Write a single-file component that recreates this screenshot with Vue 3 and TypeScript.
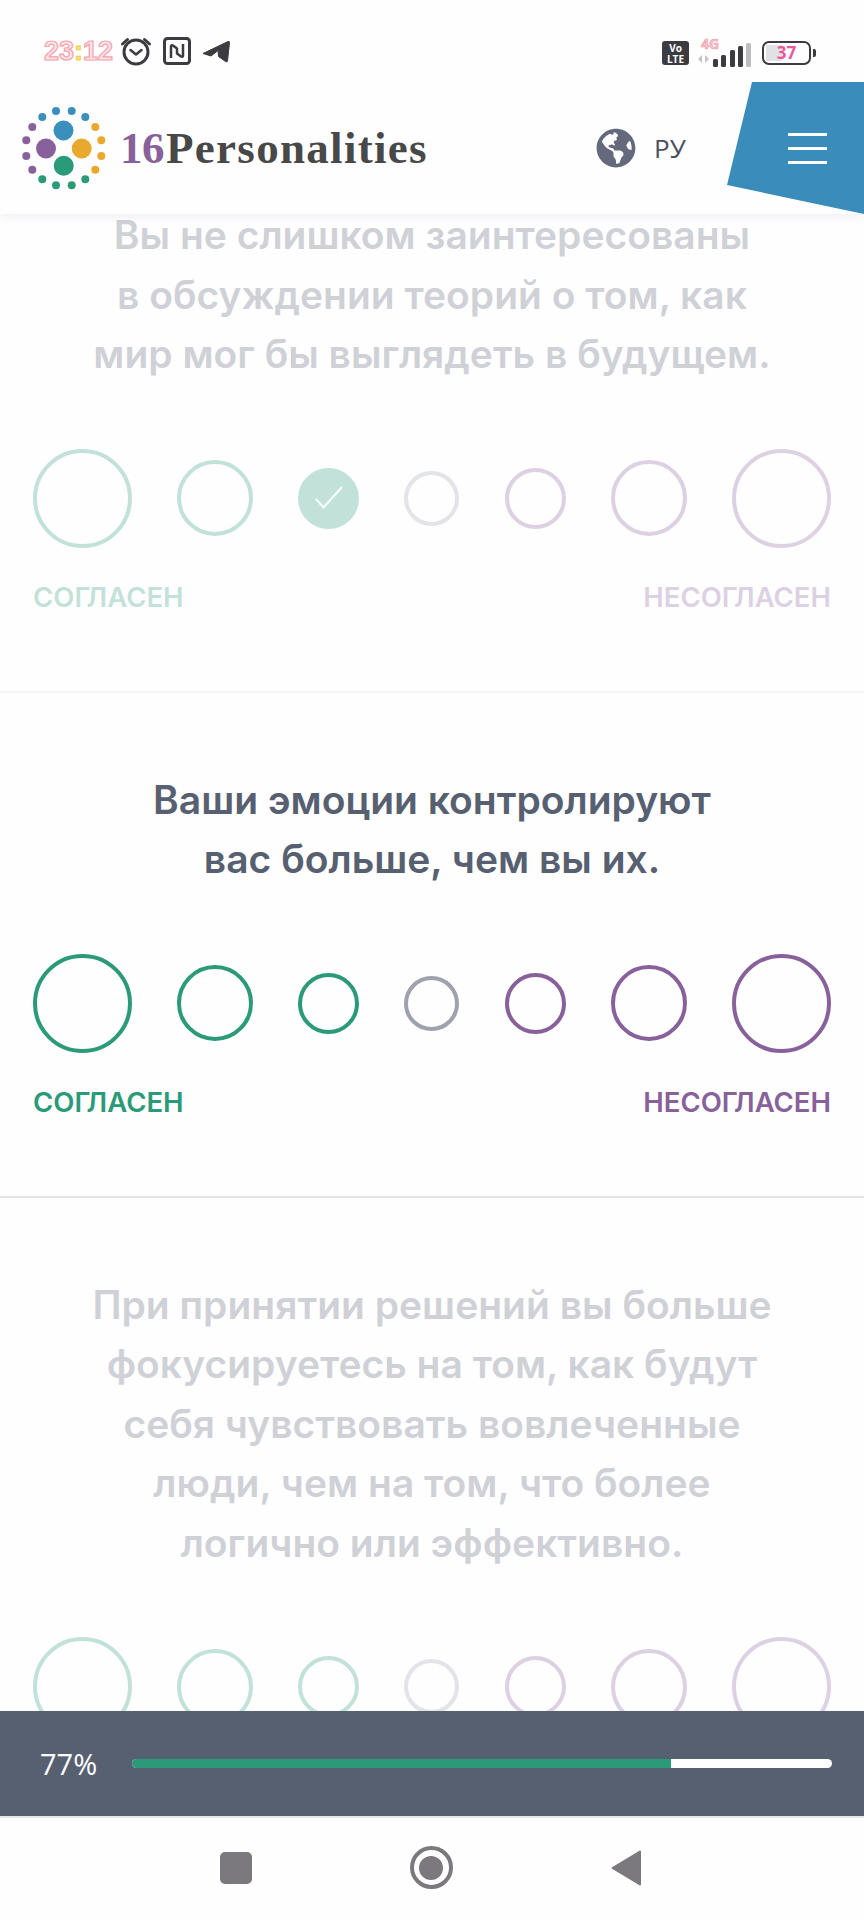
<script setup lang="ts">
interface Question {
  lines: string[]
  active: boolean
  selected?: number
  // the last question runs under the progress bar, its captions are never seen
  hideCaptions?: boolean
}

const questions: Question[] = [
  {
    lines: ['Вы не слишком заинтересованы', 'в обсуждении теорий о том, как', 'мир мог бы выглядеть в будущем.'],
    active: false,
    selected: 2,
  },
  {
    lines: ['Ваши эмоции контролируют', 'вас больше, чем вы их.'],
    active: true,
  },
  {
    lines: [
      'При принятии решений вы больше',
      'фокусируетесь на том, как будут',
      'себя чувствовать вовлеченные',
      'люди, чем на том, что более',
      'логично или эффективно.',
    ],
    active: false,
    hideCaptions: true,
  },
]

const options = [
  { size: 99, tone: 'agree' },
  { size: 76, tone: 'agree' },
  { size: 61, tone: 'agree' },
  { size: 55, tone: 'neutral' },
  { size: 61, tone: 'disagree' },
  { size: 76, tone: 'disagree' },
  { size: 99, tone: 'disagree' },
]

const logoBig = [
  { x: 63.5, y: 130.5, c: '#3a8fbd' },
  { x: 46, y: 148.5, c: '#88619a' },
  { x: 81.7, y: 148.5, c: '#e8a92e' },
  { x: 63.7, y: 165.7, c: '#2a9a78' },
]

const logoSmall = [
  { x: 42.3, y: 117, c: '#3a8fbd' },
  { x: 56, y: 111, c: '#3a8fbd' },
  { x: 71.7, y: 111, c: '#3a8fbd' },
  { x: 85.3, y: 117, c: '#3a8fbd' },
  { x: 95.3, y: 127, c: '#e8a92e' },
  { x: 101.3, y: 140.3, c: '#e8a92e' },
  { x: 101.3, y: 156, c: '#e8a92e' },
  { x: 95.3, y: 169.7, c: '#e8a92e' },
  { x: 85.3, y: 179.3, c: '#2a9a78' },
  { x: 71.7, y: 185.3, c: '#2a9a78' },
  { x: 56, y: 185.3, c: '#2a9a78' },
  { x: 42.3, y: 179.3, c: '#2a9a78' },
  { x: 32.3, y: 169.7, c: '#88619a' },
  { x: 26.3, y: 156, c: '#88619a' },
  { x: 26.3, y: 140.3, c: '#88619a' },
  { x: 32.3, y: 127, c: '#88619a' },
]

const progress = 77
</script>

<template>
  <div class="phone">
    <div class="status">
      <div class="status-left">
        <span class="clock">23<i>:</i>12</span>
        <svg width="32" height="30" viewBox="0 0 32 30" fill="none" stroke="#3c3c40" aria-hidden="true">
          <circle cx="16" cy="16" r="12" stroke-width="3" />
          <path d="M10.500 14l5.500 4.500 5.500-4.500" stroke-width="2.500" stroke-linecap="round" stroke-linejoin="round" />
          <path d="M2.500 8l5-4.500M29.500 8l-5-4.500" stroke-width="3" stroke-linecap="round" />
        </svg>
        <svg width="28" height="28" viewBox="0 0 28 28" fill="none" stroke="#3c3c40" aria-hidden="true">
          <rect x="1.500" y="1.500" width="25" height="25" rx="3" stroke-width="3" />
          <path d="M8 21V9.500q0-2 2-1l4 3v5M20 7v11.500q0 2-2 1l-4-3v-5" stroke-width="2.500" stroke-linejoin="round" />
        </svg>
        <svg width="28" height="24" viewBox="0 0 28 24" aria-hidden="true">
          <path d="M1 14.500L26 2.500q1.500-.5 1.500 1L25.500 22q-.5 1.500-2 .5l-7-5-.5-6-7 5.500z" fill="#3c3c40" stroke="#3c3c40" stroke-linejoin="round" />
        </svg>
      </div>
      <div class="status-right">
        <span class="volte">Vo<br />LTE</span>
        <div class="signal">
          <span class="net">4G</span>
          <svg width="54" height="25" viewBox="0 0 54 25" aria-hidden="true">
            <path d="M5 12v8l-4-4zM8 12v8l4-4z" fill="#c4c4c6" />
            <rect x="16" y="16" width="5" height="8" rx="1.500" fill="#3c3c40" />
            <rect x="24" y="12" width="5" height="12" rx="1.500" fill="#3c3c40" />
            <rect x="33" y="7" width="5" height="17" rx="1.500" fill="#3c3c40" />
            <rect x="41" y="3" width="5" height="21" rx="1.500" fill="#3c3c40" />
            <rect x="49" y="0" width="5" height="24" rx="1.500" fill="#bdbdc0" />
          </svg>
        </div>
        <div class="battery">
          <div class="battery-body">
            <span class="battery-level" />
            <span class="battery-text">37</span>
          </div>
          <span class="battery-nub" />
        </div>
      </div>
    </div>

    <header class="site-header">
      <div class="logo">
        <svg class="logo-mark" width="88" height="112" viewBox="20 92 88 112" aria-hidden="true">
          <circle v-for="d in logoBig" :key="`b${d.x}`" :cx="d.x" :cy="d.y" r="10" :fill="d.c" />
          <circle v-for="d in logoSmall" :key="`s${d.x}-${d.y}`" :cx="d.x" :cy="d.y" r="4" :fill="d.c" />
        </svg>
        <span class="logo-text"><b>16</b>Personalities</span>
      </div>
      <div class="lang">
        <svg width="40" height="40" viewBox="0 0 496 512" aria-hidden="true">
          <path
            fill="#646a7c"
            d="M248 8C111.030 8 0 119.030 0 256s111.030 248 248 248 248-111.030 248-248S384.970 8 248 8zm82.290 357.600c-3.900 3.880-7.990 7.950-11.310 11.280-2.990 3-5.100 6.700-6.170 10.710-1.510 5.660-2.730 11.380-4.770 16.870l-17.390 46.850c-13.760 3-28 4.690-42.650 4.690v-27.380c1.690-12.620-7.640-36.260-22.630-51.250-6-6-9.370-14.140-9.370-22.630v-32.010c0-11.640-6.270-22.340-16.460-27.970-14.370-7.950-34.810-19.060-48.810-26.110-11.480-5.780-22.100-13.140-31.650-21.750l-.8-.72a114.792 114.792 0 0 1-18.060-20.740c-9.380-13.770-24.660-36.420-34.590-51.140 20.470-45.500 57.360-82.040 103.200-101.890l24.010 12.010C203.480 89.740 216 82.010 216 70.110v-11.300c7.990-1.290 16.120-2.110 24.450-2.420l28.300 28.300c6.250 6.250 6.250 16.380 0 22.630L264 112l-10.340 10.340c-3.120 3.120-3.120 8.190 0 11.310l4.690 4.690c3.120 3.120 3.120 8.190 0 11.310l-8 8a8.008 8.008 0 0 1-5.660 2.340h-8.990c-2.080 0-4.080.81-5.580 2.270l-9.920 9.650a8.008 8.008 0 0 0-1.580 9.310l15.590 31.190c2.660 5.320-1.210 11.580-7.150 11.580h-5.640c-1.930 0-3.790-.7-5.240-1.960l-9.280-8.060a16.017 16.017 0 0 0-15.550-3.100l-31.170 10.390a11.950 11.950 0 0 0-8.170 11.340c0 4.530 2.560 8.660 6.610 10.690l11.080 5.540c9.410 4.710 19.790 7.160 30.310 7.160s22.590 27.290 32 32h66.750c8.490 0 16.620 3.370 22.630 9.370l13.690 13.690a30.503 30.503 0 0 1 8.930 21.570 46.536 46.536 0 0 1-13.720 32.980zM417 274.250c-5.790-1.450-10.840-5-14.150-9.970l-17.980-26.970a23.970 23.970 0 0 1 0-26.620l19.590-29.380c2.320-3.470 5.500-6.290 9.240-8.150l12.980-6.490C440.200 193.590 448 223.870 448 256c0 8.670-.74 17.160-1.820 25.540L417 274.250z"
          />
        </svg>
        <span>РУ</span>
      </div>
      <button class="menu" aria-label="Меню">
        <span /><span /><span />
      </button>
    </header>

    <main class="test">
      <section
        v-for="(q, i) in questions"
        :key="i"
        class="question"
        :class="{ 'question--dim': !q.active }"
      >
        <p class="question-text">
          <span v-for="line in q.lines" :key="line">{{ line }}</span>
        </p>
        <div class="options">
          <span
            v-for="(o, n) in options"
            :key="n"
            class="option"
            :class="[`option--${o.tone}`, { 'option--on': q.selected === n }]"
            :style="{ width: `${o.size}px`, height: `${o.size}px` }"
          >
            <svg v-if="q.selected === n" width="30" height="26" viewBox="0 0 30 26" fill="none" stroke="#fff" stroke-width="2" aria-hidden="true">
              <path d="M2 14l7.500 8.500L28 2" />
            </svg>
          </span>
        </div>
        <div v-if="!q.hideCaptions" class="captions">
          <span class="agree">СОГЛАСЕН</span>
          <span class="disagree">НЕСОГЛАСЕН</span>
        </div>
      </section>
    </main>

    <div class="footer">
      <div class="progress">
        <span class="progress-value">{{ progress }}%</span>
        <div class="progress-track">
          <div class="progress-fill" :style="{ width: `${progress}%` }" />
        </div>
      </div>
      <nav class="nav">
        <span class="nav-square" />
        <span class="nav-home"><span /></span>
        <svg width="30" height="36" viewBox="0 0 30 36" aria-hidden="true">
          <path d="M29 1.500v33L1.500 18z" fill="#7b797e" stroke="#7b797e" stroke-width="2" stroke-linejoin="round" />
        </svg>
      </nav>
    </div>
  </div>
</template>

<style scoped>
.phone {
  position: relative;
  width: 864px;
  height: 1920px;
  overflow: hidden;
  background: #fefeff;
  font-family: Inter, "Noto Sans", sans-serif;
}

/* status bar */
.status {
  position: relative;
  z-index: 3;
  height: 82px;
  display: flex;
  justify-content: space-between;
  align-items: flex-start;
  padding: 36px 48px 0 44px;
  box-sizing: border-box;
  background: #fefeff;
}

.status-left {
  display: flex;
  align-items: center;
  gap: 11px;
  height: 30px;
}

.clock {
  width: 65px;
  font: 700 27px/30px "Liberation Sans", sans-serif;
  white-space: nowrap;
  color: #fde3e6;
  -webkit-text-stroke: 1.200px #f3a3ae;
}

.clock i {
  font-style: normal;
  color: #fbe96a;
  -webkit-text-stroke: 1px #e8cf55;
}

.status-right {
  display: flex;
  align-items: flex-start;
  gap: 11px;
}

.volte {
  width: 27px;
  height: 24px;
  margin-top: 5px;
  border-radius: 3px;
  background: #3c3c40;
  color: #fff;
  font: 700 10px/10.500px "Open Sans", sans-serif;
  text-align: center;
  padding-top: 2px;
  box-sizing: border-box;
}

.signal {
  position: relative;
  width: 54px;
  height: 28px;
  margin: 4px 0 0 -3px;
}

.signal svg {
  display: block;
  margin-top: 3px;
}

.net {
  position: absolute;
  left: 4px;
  top: -3px;
  font: 700 14px/14px "Open Sans", sans-serif;
  color: #f8c4cc;
  -webkit-text-stroke: .6px #ee9aa8;
}

.battery {
  display: flex;
  align-items: center;
  gap: 2px;
  margin-top: 5px;
}

.battery-body {
  position: relative;
  width: 49px;
  height: 24px;
  border: 2.500px solid #3c3c40;
  border-radius: 7px;
  box-sizing: border-box;
  overflow: hidden;
}

.battery-level {
  position: absolute;
  left: 2px;
  top: 2px;
  bottom: 2px;
  width: 16px;
  background: #e2e2e4;
}

.battery-text {
  position: absolute;
  inset: 0;
  text-align: center;
  font: 700 17px/19px "Open Sans", sans-serif;
  color: #e8589c;
}

.battery-nub {
  width: 3px;
  height: 8px;
  border-radius: 0 2px 2px 0;
  background: #3c3c40;
}

/* header */
.site-header {
  position: relative;
  z-index: 2;
  height: 132px;
  display: flex;
  align-items: center;
  background: #fefeff;
  box-shadow: 0 2px 10px rgb(90 100 120 / 0.1);
}

.logo {
  display: flex;
  align-items: center;
  width: 596px;
  padding-left: 20px;
  box-sizing: border-box;
}

.logo-mark {
  display: block;
  width: 88px;
  height: 112px;
  flex-shrink: 0;
}

.logo-text {
  margin-left: 12px;
  font: 700 45px/1 "Liberation Serif", serif;
  letter-spacing: 1.300px;
  white-space: nowrap;
  color: #484848;
}

.logo-text b {
  margin-right: 2px;
  letter-spacing: -.5px;
  color: #88619a;
}

.lang {
  display: flex;
  align-items: center;
  gap: 18px;
  font: 400 26px/1 "Open Sans", sans-serif;
  color: #4a5060;
}

.menu {
  position: absolute;
  top: 0;
  right: 0;
  width: 137px;
  height: 132px;
  border: 0;
  padding: 0 37px 0 61px;
  background: #3a8dba;
  clip-path: polygon(25px 0, 100% 0, 100% 100%, 0 103px);
  display: flex;
  flex-direction: column;
  justify-content: center;
  gap: 11px;
}

.menu span {
  display: block;
  height: 3px;
  background: #fff;
}

/* questions */
.test {
  margin-top: -9px;
}

.question {
  padding: 0 33px 77px;
  margin-bottom: 77px;
  border-bottom: 2px solid #e2e3e9;
}

.question:last-child {
  border-bottom: 0;
}

.question--dim {
  border-bottom-color: #f4f4f7;
}

.question--dim > * {
  opacity: .28;
}

.question-text {
  margin: 0 0 65px;
  font-size: 39px;
  font-weight: 600;
  line-height: 59.500px;
  text-align: center;
  color: #576071;
}

.question-text span {
  display: block;
  white-space: nowrap;
}

.options {
  display: flex;
  justify-content: space-between;
  align-items: center;
}

.option {
  display: flex;
  align-items: center;
  justify-content: center;
  border-radius: 50%;
  border: 4.500px solid;
  box-sizing: border-box;
}

.option--agree {
  border-color: #2a9a78;
}

.option--neutral {
  border-color: #9fa2ae;
}

.option--disagree {
  border-color: #88619a;
}

.option--on {
  background: #2a9a78;
}

.captions {
  display: flex;
  justify-content: space-between;
  margin-top: 33px;
  font-size: 27.500px;
  font-weight: 600;
  line-height: 33px;
}

.agree {
  color: #2a9a78;
}

.disagree {
  color: #88619a;
}

/* bottom fixed area */
.footer {
  position: absolute;
  left: 0;
  right: 0;
  bottom: 0;
  z-index: 3;
}

.progress {
  height: 105px;
  display: flex;
  align-items: center;
  gap: 35px;
  padding: 0 32px 0 40px;
  background: #576071;
  box-sizing: border-box;
}

.progress-value {
  width: 57px;
  font: 400 29px/1 "Open Sans", sans-serif;
  color: #fff;
}

.progress-track {
  flex: 1;
  height: 9px;
  border-radius: 5px;
  background: #fff;
  overflow: hidden;
}

.progress-fill {
  height: 100%;
  background: #2a9a78;
}

.nav {
  height: 104px;
  border-top: 2px solid #e6e7ec;
  box-sizing: border-box;
  display: flex;
  align-items: center;
  justify-content: center;
  gap: 158px;
  padding: 0 4px 3px 0;
  background: #fefeff;
}

.nav-square {
  width: 32px;
  height: 32px;
  border-radius: 5px;
  background: #7b797e;
}

.nav-home {
  width: 43px;
  height: 43px;
  border: 4px solid #7b797e;
  border-radius: 50%;
  box-sizing: border-box;
  display: flex;
  align-items: center;
  justify-content: center;
}

.nav-home span {
  width: 24px;
  height: 24px;
  border-radius: 50%;
  background: #7b797e;
}
</style>
